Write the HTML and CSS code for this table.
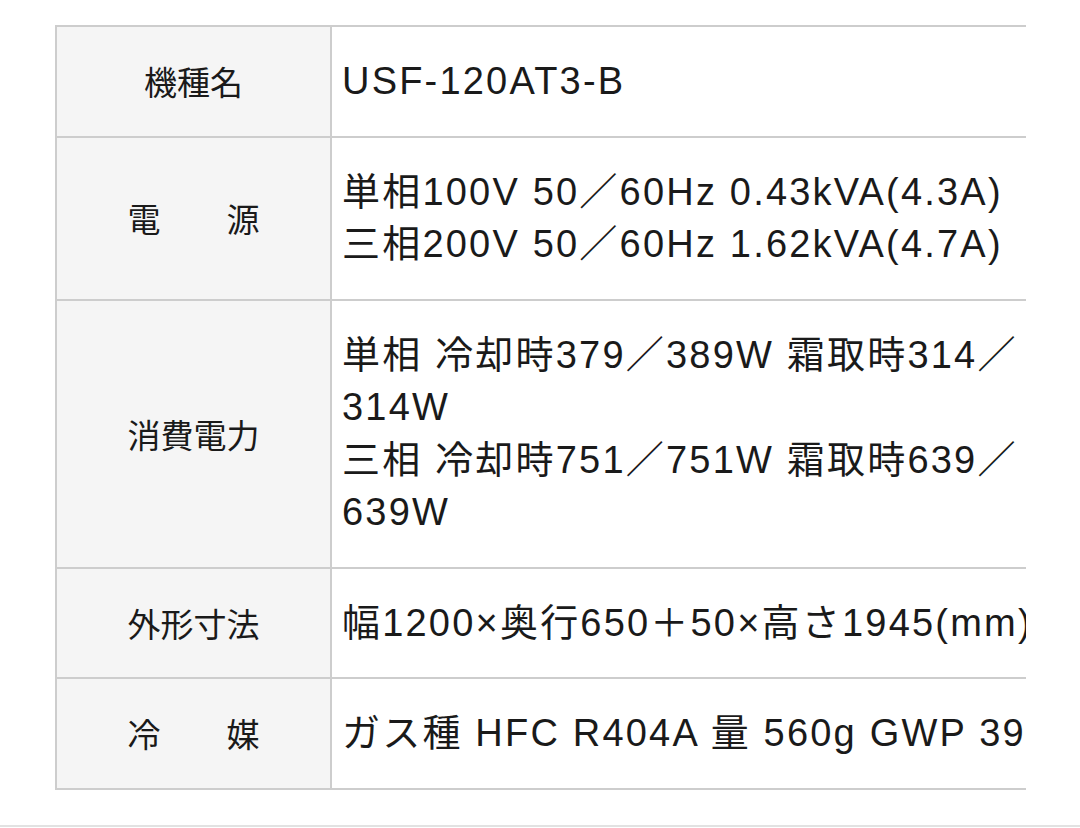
FILE: index.html
```html
<!DOCTYPE html>
<html lang="ja">
<head>
<meta charset="utf-8">
<link rel="stylesheet" href="styles.css">
</head>
<body>
<div class="page">
  <div class="scroll">
    <table class="spec">
      <tr>
        <th>機種名</th>
        <td>USF-120AT3-B</td>
      </tr>
      <tr>
        <th>電　　源</th>
        <td>単相100V 50／60Hz 0.43kVA(4.3A)<br>三相200V 50／60Hz 1.62kVA(4.7A)</td>
      </tr>
      <tr>
        <th>消費電力</th>
        <td>単相 冷却時379／389W 霜取時314／<br>314W<br>三相 冷却時751／751W 霜取時639／<br>639W</td>
      </tr>
      <tr>
        <th>外形寸法</th>
        <td>幅1200×奥行650＋50×高さ1945(mm)</td>
      </tr>
      <tr>
        <th>冷　　媒</th>
        <td>ガス種 HFC R404A 量 560g GWP 3920</td>
      </tr>
    </table>
  </div>
</div>
<div class="footer-line"></div>
</body>
</html>
```

FILE: styles.css
```css
html, body {
  margin: 0;
  padding: 0;
  background: #ffffff;
}

body {
  font-family: "Liberation Sans", "Noto Sans CJK JP", sans-serif;
  color: #1a1a1a;
  height: 828px;
  overflow: hidden;
}

.page {
  padding: 25px 0 0 55px;
  height: 825px;
  box-sizing: border-box;
}

.scroll {
  width: 971px;
  overflow: hidden;
}

.spec {
  border-collapse: collapse;
  width: 1140px;
  border: 2px solid #cdcdcd;
}

.spec th,
.spec td {
  border: 2px solid #cdcdcd;
  padding: 28px 0;
  vertical-align: middle;
}

.spec th {
  width: 275px;
  background: #f5f5f5;
  font-weight: normal;
  font-size: 33px;
  line-height: 52px;
  text-align: center;
  font-family: "Noto Sans CJK JP", sans-serif;
  box-sizing: border-box;
}

.spec td {
  background: #ffffff;
  font-size: 38px;
  letter-spacing: 2.2px;
  line-height: 52.5px;
  padding-left: 10px;
  white-space: nowrap;
  text-align: left;
}

.footer-line {
  height: 2px;
  background: #e2e2e2;
}
```
